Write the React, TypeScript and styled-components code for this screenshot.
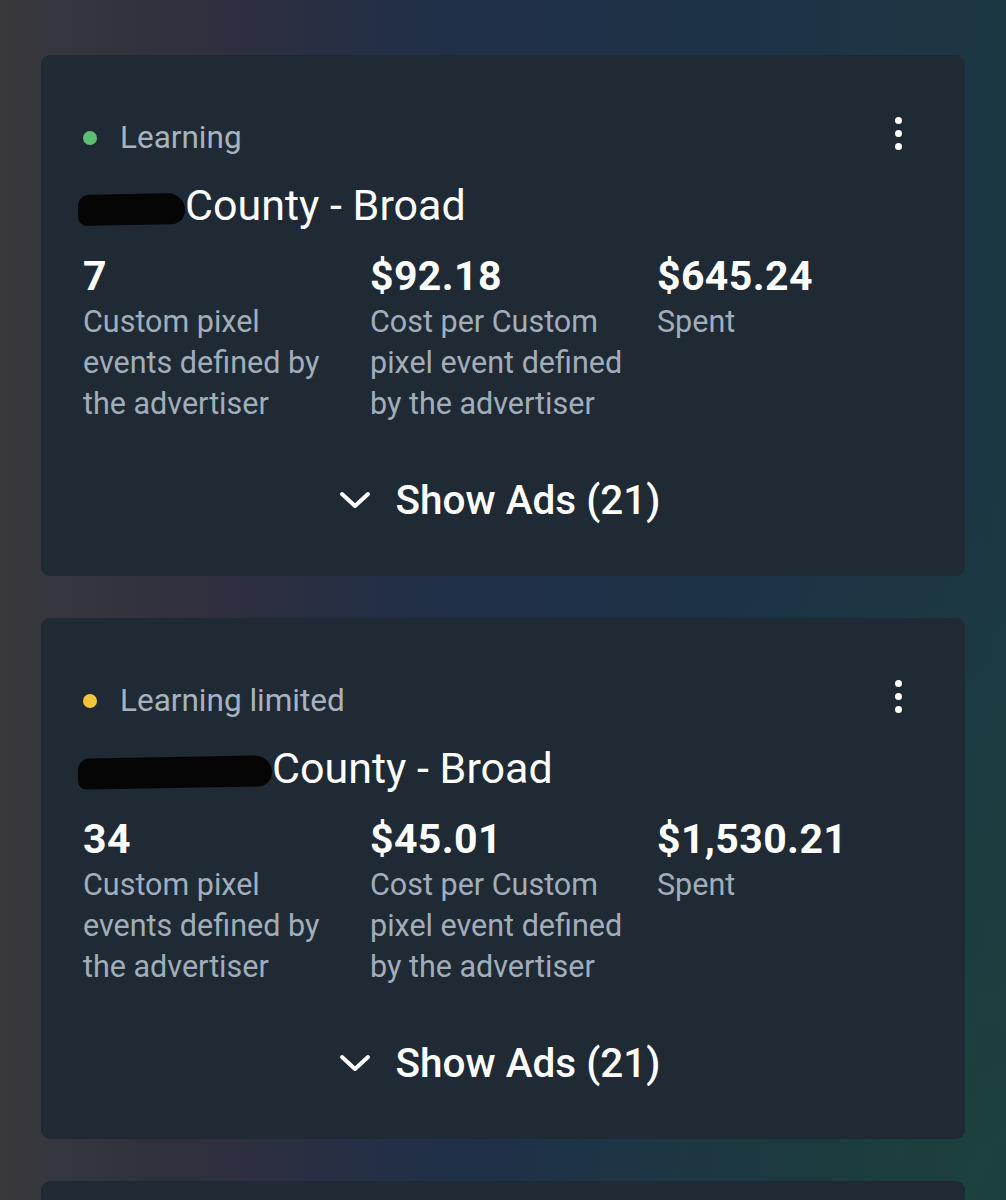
import React from "react";
import styled, { createGlobalStyle } from "styled-components";

const Global = createGlobalStyle`
  html, body { margin: 0; padding: 0; }
  body {
    background: #1e2b3f;
    font-family: Roboto, "Noto Sans", "Liberation Sans", sans-serif;
  }
`;

const Page = styled.div`
  width: 1006px;
  height: 1200px;
  overflow: hidden;
  box-sizing: border-box;
  padding: 55px 41px 0;
  display: flex;
  flex-direction: column;
  gap: 42px;
  background:
    radial-gradient(ellipse 520px 700px at 1006px 1200px, rgba(28, 66, 60, 0.9), rgba(28, 66, 60, 0) 100%),
    linear-gradient(90deg, #38383d 0%, #2f2f3f 22%, #1f2f48 45%, #1d3246 75%, #1c3843 100%);
`;

const Card = styled.section`
  position: relative;
  background: #1f2a35;
  border-radius: 9px;
  height: 521px;
  flex-shrink: 0;
  box-sizing: border-box;
  padding: 61px 42px 0 42px;
  display: flex;
  flex-direction: column;
`;

const Kebab = styled.button`
  position: absolute;
  top: 62px;
  right: 61px;
  width: 12px;
  height: 33px;
  padding: 0;
  border: none;
  background: transparent;
  display: flex;
  flex-direction: column;
  justify-content: space-between;
  align-items: center;
  span {
    width: 7px;
    height: 7px;
    border-radius: 50%;
    background: #ffffff;
  }
`;

const Status = styled.div`
  display: flex;
  align-items: center;
  gap: 23px;
  color: #a8b3bf;
  font-size: 31.5px;
  line-height: 44px;
`;

const Dot = styled.span<{ $color: string }>`
  width: 14px;
  height: 14px;
  border-radius: 50%;
  background: ${(p) => p.$color};
  flex-shrink: 0;
`;

const Title = styled.h2`
  margin: 21px 0 0;
  font-weight: 400;
  font-size: 43px;
  line-height: 48px;
  color: #ffffff;
  display: flex;
  align-items: center;
`;

const Redact = styled.span<{ $w: number }>`
  display: inline-block;
  width: ${(p) => p.$w}px;
  height: 31px;
  margin-left: -5px;
  background: #050505;
  border-radius: 16px 24px 20px 12px;
  transform: rotate(-1deg);
  margin-top: 8px;
`;

const Metrics = styled.div`
  display: grid;
  grid-template-columns: 287px 287px 1fr;
  margin-top: 24px;
`;

const Metric = styled.div`
  display: flex;
  flex-direction: column;
`;

const Value = styled.div`
  font-weight: 700;
  font-size: 41px;
  line-height: 46px;
  color: #ffffff;
  letter-spacing: 0.4px;
`;

const Label = styled.div`
  margin-top: 2px;
  font-size: 30.5px;
  line-height: 41px;
  color: #a2adba;
  padding-right: 20px;
`;

const ShowAds = styled.button`
  align-self: center;
  margin-top: 54px;
  margin-right: 7px;
  display: flex;
  align-items: center;
  gap: 25px;
  border: none;
  background: transparent;
  color: #ffffff;
  font-family: inherit;
  font-size: 40.5px;
  font-weight: 500;
  line-height: 44px;
  padding: 0;
`;

type Row = {
  status: string;
  color: string;
  redact: number;
  values: [string, string, string];
};

const rows: Row[] = [
  { status: "Learning", color: "#5cbf74", redact: 107, values: ["7", "$92.18", "$645.24"] },
  { status: "Learning limited", color: "#f4c43b", redact: 194, values: ["34", "$45.01", "$1,530.21"] },
];

const labels = [
  "Custom pixel events defined by the advertiser",
  "Cost per Custom pixel event defined by the advertiser",
  "Spent",
];

export default function App() {
  return (
    <>
      <Global />
      <Page>
        {rows.map((r, i) => (
          <Card key={i}>
            <Kebab aria-label="More">
              <span />
              <span />
              <span />
            </Kebab>
            <Status>
              <Dot $color={r.color} />
              {r.status}
            </Status>
            <Title>
              <Redact $w={r.redact} />
              County - Broad
            </Title>
            <Metrics>
              {r.values.map((v, j) => (
                <Metric key={j}>
                  <Value>{v}</Value>
                  <Label>{labels[j]}</Label>
                </Metric>
              ))}
            </Metrics>
            <ShowAds>
              <svg width="32" height="20" viewBox="0 0 32 20" fill="none">
                <path d="M3 4 L16 16 L29 4" stroke="#ffffff" strokeWidth="4" strokeLinecap="round" strokeLinejoin="round" />
              </svg>
              Show Ads (21)
            </ShowAds>
          </Card>
        ))}
        <Card />
      </Page>
    </>
  );
}
